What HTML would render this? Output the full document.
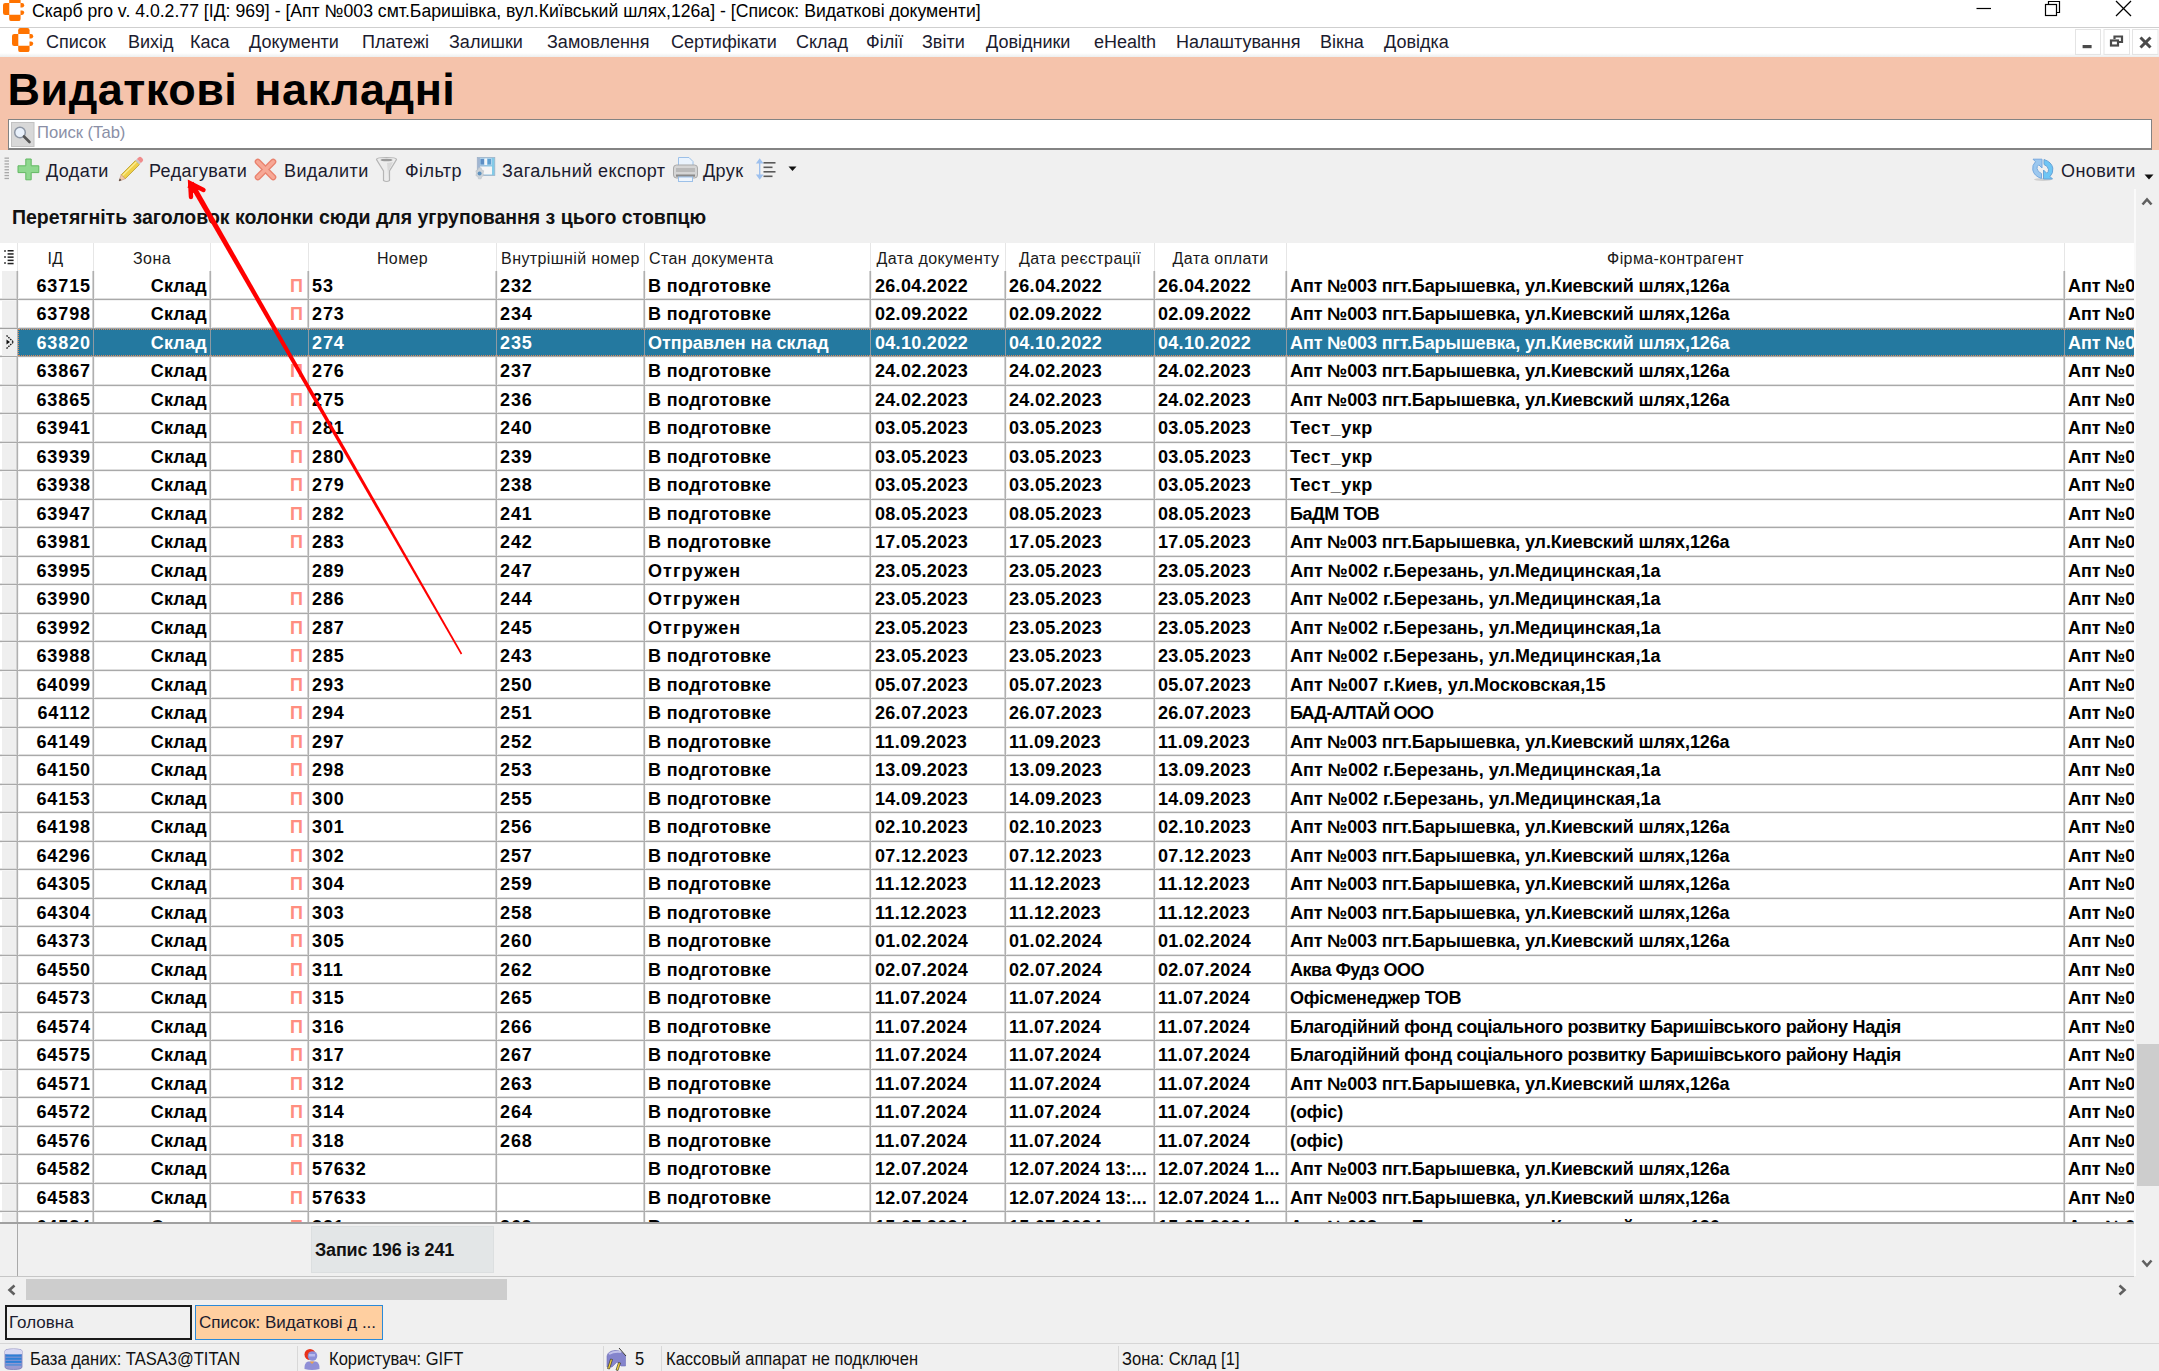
<!DOCTYPE html>
<html><head><meta charset="utf-8"><title>Скарб pro</title><style>
*{margin:0;padding:0;box-sizing:border-box}
html,body{width:2159px;height:1371px;overflow:hidden;background:#f0f0f0;font-family:"Liberation Sans", sans-serif;}
.a{position:absolute}
.t{position:absolute;white-space:nowrap;line-height:1}
.cell{position:absolute;white-space:nowrap;overflow:hidden;font-weight:bold;font-size:18px;line-height:28px;color:#000}
.n{letter-spacing:0.9px}
.d{letter-spacing:0.3px}
.f{letter-spacing:-0.3px}
.s{letter-spacing:0.4px}
.hl{position:absolute;left:0;width:2134px;height:1px;background:#a9a9a9;box-shadow:0 -1px 0 #dedede,0 1px 0 #f3f3f3}
.vl{position:absolute;width:1px;background:#b0b0b0;box-shadow:-1px 0 0 #d2d2d2,1px 0 0 #f3f3f3}
.hd{position:absolute;top:245px;height:28px;font-size:16px;letter-spacing:0.4px;line-height:28px;color:#1a1a1a;white-space:nowrap;text-align:center;overflow:hidden}
.mn{position:absolute;white-space:nowrap;top:31px;font-size:18px;line-height:22px;color:#1b1b2e}
.tb{position:absolute;white-space:nowrap;top:159.5px;font-size:18px;letter-spacing:0.4px;line-height:22px;color:#1b1b2e}
.sb{position:absolute;white-space:nowrap;top:1348px;font-size:18.8px;line-height:22px;color:#111;transform:scaleX(0.88);transform-origin:0 0}
</style></head>
<body>
<div class="a" style="left:0;top:0;width:2159px;height:27px;background:#fff"></div><div class="a" style="left:0;top:27px;width:2159px;height:1px;background:#cfcfcf"></div><svg class="a" style="left:3px;top:-3px" width="22" height="25" viewBox="0 0 22 25">
<g fill="#ff7300">
<path d="M6.2 2.2 Q6.2 0 8.4 0 H15.4 Q17.6 0 17.6 2.2 V5.9 H6.2 Z"/>
<path d="M0 8.1 Q0 5.9 2.2 5.9 H6.3 V17.9 H2.2 Q0 17.9 0 15.7 Z"/>
<path d="M6.2 17.8 H17.6 V21.9 Q17.6 24.1 15.4 24.1 H8.4 Q6.2 24.1 6.2 21.9 Z"/>
<path d="M17.5 5.9 H19 Q21.2 5.9 21.2 8.2 Q21.2 10.6 19 10.6 H17.5 Z"/>
<path d="M17.5 13.4 H19 Q21.2 13.4 21.2 15.6 Q21.2 17.9 19 17.9 H17.5 Z"/>
</g></svg><div class="t" style="left:32px;top:0px;font-size:17.65px;color:#000;line-height:22px">Скарб pro v. 4.0.2.77 [ІД: 969] - [Апт №003 смт.Баришівка, вул.Київський шлях,126а] - [Список: Видаткові документи]</div><svg class="a" style="left:1960px;top:0" width="199" height="27" viewBox="0 0 199 27">
<g stroke="#000" stroke-width="1.2" fill="none">
<line x1="16.5" y1="8.5" x2="31" y2="8.5"/>
<rect x="85.5" y="4.5" width="11" height="11"/>
<path d="M88.5 4.5 V1.5 H99.5 V12.5 H96.5"/>
<line x1="156" y1="1" x2="171" y2="16"/>
<line x1="171" y1="1" x2="156" y2="16"/>
</g></svg><div class="a" style="left:0;top:28px;width:2159px;height:29px;background:#fff"></div><div class="a" style="left:0;top:53px;width:2159px;height:4px;background:linear-gradient(#fff,#eceeee)"></div><svg class="a" style="left:12px;top:28px" width="22" height="25" viewBox="0 0 22 25">
<g fill="#ff7300">
<path d="M6.2 2.2 Q6.2 0 8.4 0 H15.4 Q17.6 0 17.6 2.2 V5.9 H6.2 Z"/>
<path d="M0 8.1 Q0 5.9 2.2 5.9 H6.3 V17.9 H2.2 Q0 17.9 0 15.7 Z"/>
<path d="M6.2 17.8 H17.6 V21.9 Q17.6 24.1 15.4 24.1 H8.4 Q6.2 24.1 6.2 21.9 Z"/>
<path d="M17.5 5.9 H19 Q21.2 5.9 21.2 8.2 Q21.2 10.6 19 10.6 H17.5 Z"/>
<path d="M17.5 13.4 H19 Q21.2 13.4 21.2 15.6 Q21.2 17.9 19 17.9 H17.5 Z"/>
</g></svg><div class="mn" style="left:46px">Список</div><div class="mn" style="left:128px">Вихід</div><div class="mn" style="left:190px">Каса</div><div class="mn" style="left:249px">Документи</div><div class="mn" style="left:362px">Платежі</div><div class="mn" style="left:449px">Залишки</div><div class="mn" style="left:547px">Замовлення</div><div class="mn" style="left:671px">Сертифікати</div><div class="mn" style="left:796px">Склад</div><div class="mn" style="left:866px">Філії</div><div class="mn" style="left:922px">Звіти</div><div class="mn" style="left:986px">Довідники</div><div class="mn" style="left:1094px">eHealth</div><div class="mn" style="left:1176px">Налаштування</div><div class="mn" style="left:1320px">Вікна</div><div class="mn" style="left:1384px">Довідка</div><svg class="a" style="left:2074px;top:29px" width="85" height="27" viewBox="0 0 85 27">
<g fill="none" stroke="#e4e4e4" stroke-width="1">
<rect x="1.5" y="0.5" width="25" height="25"/>
<rect x="30" y="0.5" width="25.5" height="25"/>
<rect x="58.5" y="0.5" width="25.5" height="25"/>
</g>
<rect x="8.6" y="16" width="9" height="3.2" fill="#4a4a4a"/>
<g fill="none" stroke="#4a4a4a" stroke-width="2.2">
<rect x="37" y="11.5" width="7" height="5"/>
<path d="M40.5 10 V7.5 H48 V13 H45"/>
</g>
<g stroke="#4a4a4a" stroke-width="3" stroke-linecap="butt">
<line x1="66.5" y1="8.5" x2="76.5" y2="18.5"/>
<line x1="76.5" y1="8.5" x2="66.5" y2="18.5"/>
</g></svg><div class="a" style="left:0;top:57px;width:2159px;height:93px;background:#f5c3ab"></div><div class="t" style="left:7.5px;top:66px;font-size:45px;font-weight:bold;line-height:48px;color:#000;letter-spacing:0.49px;word-spacing:4px">Видаткові накладні</div><div class="a" style="left:8px;top:119px;width:2144px;height:31px;background:#fff;border:1px solid #838383;border-width:1px 1px 2px 1px"></div><svg class="a" style="left:11px;top:122px" width="24" height="25" viewBox="0 0 24 25">
<rect x="0.5" y="0.5" width="22.5" height="24" fill="#d8d8d8" stroke="#c2c2c2"/>
<circle cx="9" cy="10.5" r="5.3" fill="#e9f1fb" stroke="#8d96a4" stroke-width="1.5"/>
<line x1="13" y1="14.5" x2="18.5" y2="20" stroke="#555" stroke-width="2.6" stroke-linecap="round"/>
</svg><div class="t" style="left:37px;top:123px;font-size:16.6px;line-height:20px;color:#8a8fa6">Поиск (Tab)</div><svg class="a" style="left:4px;top:157px" width="6" height="24" viewBox="0 0 6 24"><g fill="#a8a8a8"><rect x="0.5" y="0.5" width="4.5" height="1.3"/><rect x="0.5" y="3.4" width="4.5" height="1.3"/><rect x="0.5" y="6.3" width="4.5" height="1.3"/><rect x="0.5" y="9.2" width="4.5" height="1.3"/><rect x="0.5" y="12.1" width="4.5" height="1.3"/><rect x="0.5" y="15.0" width="4.5" height="1.3"/><rect x="0.5" y="17.9" width="4.5" height="1.3"/><rect x="0.5" y="20.8" width="4.5" height="1.3"/></g></svg><svg class="a" style="left:17px;top:158px" width="23" height="23" viewBox="0 0 23 23">
<path d="M8.8 1 H14.2 V7.8 H21.8 V14.6 H14.2 V21.8 H8.8 V14.6 H1 V7.8 H8.8 Z" fill="#8fd88f" stroke="#63b863" stroke-width="1"/>
</svg><svg class="a" style="left:117px;top:156px" width="28" height="27" viewBox="0 0 28 27">
<path d="M4.2 18.8 L18.4 4.6 L22.4 8.6 L8.2 22.8 Z" fill="#f0d048" stroke="#b89a2c" stroke-width="0.8"/>
<path d="M5.6 19.6 L19.4 5.8" stroke="#fbef9a" stroke-width="1.2"/>
<path d="M18.4 4.6 L19.9 3.1 L23.9 7.1 L22.4 8.6 Z" fill="#c8c8c8"/>
<path d="M19.9 3.1 L21.5 1.5 Q23 0 24.5 1.5 L25.5 2.5 Q27 4 25.5 5.5 L23.9 7.1 Z" fill="#f08c8c"/>
<path d="M2 25 L4.2 18.8 L8.2 22.8 Z" fill="#f2c9a6" stroke="#c99478" stroke-width="0.6"/>
<path d="M2 25 L2.8 22.6 L4.4 24.2 Z" fill="#333"/>
</svg><svg class="a" style="left:253px;top:157px" width="25" height="25" viewBox="0 0 25 25">
<g stroke="#e9826e" stroke-width="6.2" stroke-linecap="round">
<line x1="4.8" y1="4.8" x2="20.2" y2="20.2"/><line x1="20.2" y1="4.8" x2="4.8" y2="20.2"/>
</g>
<g stroke="#f7a896" stroke-width="3.6" stroke-linecap="round">
<line x1="4.8" y1="4.8" x2="20.2" y2="20.2"/><line x1="20.2" y1="4.8" x2="4.8" y2="20.2"/>
</g></svg><svg class="a" style="left:375px;top:156px" width="24" height="27" viewBox="0 0 24 27">
<path d="M1.5 3.5 Q1.5 1.5 11.5 1.5 Q21.5 1.5 21.5 3.5 L14.5 15 V24.5 Q11.5 26.5 8.5 24.5 V15 Z" fill="#ececec" stroke="#b5b5b5" stroke-width="1.2"/>
<ellipse cx="11.5" cy="4" rx="6" ry="1.3" fill="#9a9a9a"/>
<path d="M12 7 L18 6 L13.5 15 V24" fill="#d0d0d0" opacity="0.7"/>
</svg><svg class="a" style="left:471px;top:156px" width="26" height="26" viewBox="0 0 26 26">
<defs><linearGradient id="fg" x1="0" x2="1"><stop offset="0" stop-color="#a4b4d0"/><stop offset="1" stop-color="#7fcdea"/></linearGradient></defs>
<rect x="6.3" y="1.5" width="17.5" height="18" fill="url(#fg)" stroke="#9fb3c9" stroke-width="0.8"/>
<rect x="9" y="2.2" width="12" height="7" fill="#aed4ee"/>
<rect x="9.5" y="3" width="3.5" height="5.5" fill="#5f8fc4"/>
<rect x="16.5" y="3" width="3.5" height="5.5" fill="#5f9fd0"/>
<rect x="13.5" y="2.5" width="2.5" height="6.5" fill="#f4f6f8"/>
<rect x="9" y="10.5" width="12" height="8" fill="#f6f6f6"/>
<path d="M7.5 11.8 h2.6 l0.6 2 l2 1 l-0.6 2.4 l0.6 2.4 l-2 1 l-0.6 2.2 h-2.6 l-0.6 -2.2 l-2 -1 l0.6 -2.4 l-0.6 -2.4 l2 -1 Z" fill="#cdd3d8" stroke="#b9c1c7" stroke-width="0.6"/>
<circle cx="8.6" cy="17.6" r="2" fill="#5d90bd"/>
</svg><svg class="a" style="left:672px;top:156px" width="27" height="27" viewBox="0 0 27 27">
<path d="M6.5 1.5 H17 L21 5.5 V10 H6.5 Z" fill="#eaf3fd" stroke="#9cc0e8" stroke-width="1"/>
<rect x="1.5" y="9" width="24" height="13" rx="3" fill="#d5d5d5" stroke="#a9a9a9" stroke-width="1"/>
<rect x="4" y="12" width="19" height="4" fill="#b9b9b9"/>
<rect x="4" y="18.5" width="19" height="2.2" fill="#8a8a8a"/>
<rect x="6.5" y="21" width="14" height="4.5" fill="#eef5fd" stroke="#9cc0e8" stroke-width="1"/>
</svg><svg class="a" style="left:755px;top:158px" width="44" height="22" viewBox="0 0 44 22">
<g stroke="#9dc0ee" stroke-width="1.4" fill="#9dc0ee">
<line x1="4.7" y1="3" x2="4.7" y2="19"/>
<path d="M2.2 4.8 L4.7 1.5 L7.2 4.8 Z"/><path d="M2.2 17.2 L4.7 20.5 L7.2 17.2 Z"/>
</g>
<g fill="#5a5a5a">
<rect x="8.5" y="4" width="12" height="1.6"/>
<rect x="8.5" y="8.5" width="9" height="1.6"/>
<rect x="8.5" y="13" width="12" height="1.6"/>
<rect x="8.5" y="17.5" width="9" height="1.6"/>
</g>
<path d="M33.5 8.5 H41.5 L37.5 13 Z" fill="#111"/>
</svg><svg class="a" style="left:2031px;top:158px" width="24" height="24" viewBox="0 0 24 24">
<ellipse cx="12" cy="21.5" rx="9" ry="1.5" fill="#cfcfcf"/>
<path d="M11 1.2 H2 L4.5 3.7 Q1 7 1.8 12 Q3 18 10.5 20.5 V15.5 Q6.5 14 6 10.5 Q5.8 8 7.8 6.8 L11 10 Z" fill="#9cc8ef" stroke="#77a9de" stroke-width="1"/>
<path d="M12.5 21 H21.5 L19 18.5 Q22.5 15 21.8 10 Q20.6 4 13 1.5 V6.5 Q17 8 17.5 11.5 Q17.7 14 15.7 15.2 L12.5 12 Z" fill="#6ec6f5" stroke="#6aa3d6" stroke-width="1"/>
</svg><div class="tb" style="left:46px">Додати</div><div class="tb" style="left:149px">Редагувати</div><div class="tb" style="left:284px">Видалити</div><div class="tb" style="left:405px">Фільтр</div><div class="tb" style="left:502px">Загальний експорт</div><div class="tb" style="left:703px">Друк</div><div class="tb" style="left:2061px">Оновити</div><svg class="a" style="left:2143px;top:173px" width="12" height="9" viewBox="0 0 12 9"><path d="M1.5 1.5 H10.5 L6 6.5 Z" fill="#111"/></svg><div class="t" style="left:12px;top:206px;font-size:19.5px;font-weight:bold;line-height:22px;color:#111">Перетягніть заголовок колонки сюди для угруповання з цього стовпцю</div><div class="a" style="left:0;top:243px;width:2134px;height:28px;background:#fff"></div><svg class="a" style="left:3px;top:249px" width="12" height="16" viewBox="0 0 12 16">
<g fill="#222">
<rect x="1.2" y="1.2" width="1.6" height="1.6"/><rect x="1.2" y="7.2" width="1.6" height="1.6"/><rect x="1.2" y="13.2" width="1.6" height="1.6"/>
<rect x="4.6" y="1" width="6" height="1.5"/><rect x="4.6" y="4.2" width="6" height="1.5"/><rect x="4.6" y="7.4" width="6" height="1.5"/><rect x="4.6" y="10.6" width="6" height="1.5"/><rect x="4.6" y="13.8" width="6" height="1.5"/>
</g></svg><div class="a" style="left:0;top:271px;width:2134px;height:952px;background:#fff"></div><div class="a" style="left:2px;top:271px;width:15px;height:952px;background:#efefef"></div><div class="hd" style="left:18px;width:75px;text-align:center;">ІД</div><div class="hd" style="left:94px;width:116px;text-align:center;">Зона</div><div class="hd" style="left:211px;width:97px;text-align:center;"></div><div class="hd" style="left:309px;width:187px;text-align:center;">Номер</div><div class="hd" style="left:497px;width:147px;text-align:center;">Внутрішній номер</div><div class="hd" style="left:645px;width:225px;text-align:left;padding-left:4px;">Стан документа</div><div class="hd" style="left:871px;width:134px;text-align:center;">Дата документу</div><div class="hd" style="left:1006px;width:148px;text-align:center;">Дата реєстрації</div><div class="hd" style="left:1155px;width:131px;text-align:center;">Дата оплати</div><div class="hd" style="left:1287px;width:777px;text-align:center;">Фірма-контрагент</div><div class="hd" style="left:2065px;width:69px;text-align:center;"></div><div class="a" style="left:17px;top:243px;width:1px;height:28px;background:#e6e6e6"></div><div class="a" style="left:93px;top:243px;width:1px;height:28px;background:#e6e6e6"></div><div class="a" style="left:210px;top:243px;width:1px;height:28px;background:#e6e6e6"></div><div class="a" style="left:308px;top:243px;width:1px;height:28px;background:#e6e6e6"></div><div class="a" style="left:496px;top:243px;width:1px;height:28px;background:#e6e6e6"></div><div class="a" style="left:644px;top:243px;width:1px;height:28px;background:#e6e6e6"></div><div class="a" style="left:870px;top:243px;width:1px;height:28px;background:#e6e6e6"></div><div class="a" style="left:1005px;top:243px;width:1px;height:28px;background:#e6e6e6"></div><div class="a" style="left:1154px;top:243px;width:1px;height:28px;background:#e6e6e6"></div><div class="a" style="left:1286px;top:243px;width:1px;height:28px;background:#e6e6e6"></div><div class="a" style="left:2064px;top:243px;width:1px;height:28px;background:#e6e6e6"></div><div class="hl" style="top:299px"></div><div class="hl" style="top:328px"></div><div class="hl" style="top:356px"></div><div class="hl" style="top:385px"></div><div class="hl" style="top:413px"></div><div class="hl" style="top:442px"></div><div class="hl" style="top:470px"></div><div class="hl" style="top:499px"></div><div class="hl" style="top:527px"></div><div class="hl" style="top:556px"></div><div class="hl" style="top:584px"></div><div class="hl" style="top:613px"></div><div class="hl" style="top:641px"></div><div class="hl" style="top:670px"></div><div class="hl" style="top:698px"></div><div class="hl" style="top:727px"></div><div class="hl" style="top:755px"></div><div class="hl" style="top:784px"></div><div class="hl" style="top:812px"></div><div class="hl" style="top:841px"></div><div class="hl" style="top:869px"></div><div class="hl" style="top:898px"></div><div class="hl" style="top:926px"></div><div class="hl" style="top:955px"></div><div class="hl" style="top:983px"></div><div class="hl" style="top:1012px"></div><div class="hl" style="top:1040px"></div><div class="hl" style="top:1069px"></div><div class="hl" style="top:1097px"></div><div class="hl" style="top:1126px"></div><div class="hl" style="top:1154px"></div><div class="hl" style="top:1183px"></div><div class="hl" style="top:1211px"></div><div class="vl" style="left:17px;top:271px;height:952px"></div><div class="vl" style="left:93px;top:271px;height:952px"></div><div class="vl" style="left:210px;top:271px;height:952px"></div><div class="vl" style="left:308px;top:271px;height:952px"></div><div class="vl" style="left:496px;top:271px;height:952px"></div><div class="vl" style="left:644px;top:271px;height:952px"></div><div class="vl" style="left:870px;top:271px;height:952px"></div><div class="vl" style="left:1005px;top:271px;height:952px"></div><div class="vl" style="left:1154px;top:271px;height:952px"></div><div class="vl" style="left:1286px;top:271px;height:952px"></div><div class="vl" style="left:2064px;top:271px;height:952px"></div><div class="a" style="left:0;top:299px;width:2134px;height:1px;background:#a9a9a9"></div><div class="a" style="left:0;top:328px;width:2134px;height:1px;background:#a9a9a9"></div><div class="a" style="left:0;top:356px;width:2134px;height:1px;background:#a9a9a9"></div><div class="a" style="left:0;top:385px;width:2134px;height:1px;background:#a9a9a9"></div><div class="a" style="left:0;top:413px;width:2134px;height:1px;background:#a9a9a9"></div><div class="a" style="left:0;top:442px;width:2134px;height:1px;background:#a9a9a9"></div><div class="a" style="left:0;top:470px;width:2134px;height:1px;background:#a9a9a9"></div><div class="a" style="left:0;top:499px;width:2134px;height:1px;background:#a9a9a9"></div><div class="a" style="left:0;top:527px;width:2134px;height:1px;background:#a9a9a9"></div><div class="a" style="left:0;top:556px;width:2134px;height:1px;background:#a9a9a9"></div><div class="a" style="left:0;top:584px;width:2134px;height:1px;background:#a9a9a9"></div><div class="a" style="left:0;top:613px;width:2134px;height:1px;background:#a9a9a9"></div><div class="a" style="left:0;top:641px;width:2134px;height:1px;background:#a9a9a9"></div><div class="a" style="left:0;top:670px;width:2134px;height:1px;background:#a9a9a9"></div><div class="a" style="left:0;top:698px;width:2134px;height:1px;background:#a9a9a9"></div><div class="a" style="left:0;top:727px;width:2134px;height:1px;background:#a9a9a9"></div><div class="a" style="left:0;top:755px;width:2134px;height:1px;background:#a9a9a9"></div><div class="a" style="left:0;top:784px;width:2134px;height:1px;background:#a9a9a9"></div><div class="a" style="left:0;top:812px;width:2134px;height:1px;background:#a9a9a9"></div><div class="a" style="left:0;top:841px;width:2134px;height:1px;background:#a9a9a9"></div><div class="a" style="left:0;top:869px;width:2134px;height:1px;background:#a9a9a9"></div><div class="a" style="left:0;top:898px;width:2134px;height:1px;background:#a9a9a9"></div><div class="a" style="left:0;top:926px;width:2134px;height:1px;background:#a9a9a9"></div><div class="a" style="left:0;top:955px;width:2134px;height:1px;background:#a9a9a9"></div><div class="a" style="left:0;top:983px;width:2134px;height:1px;background:#a9a9a9"></div><div class="a" style="left:0;top:1012px;width:2134px;height:1px;background:#a9a9a9"></div><div class="a" style="left:0;top:1040px;width:2134px;height:1px;background:#a9a9a9"></div><div class="a" style="left:0;top:1069px;width:2134px;height:1px;background:#a9a9a9"></div><div class="a" style="left:0;top:1097px;width:2134px;height:1px;background:#a9a9a9"></div><div class="a" style="left:0;top:1126px;width:2134px;height:1px;background:#a9a9a9"></div><div class="a" style="left:0;top:1154px;width:2134px;height:1px;background:#a9a9a9"></div><div class="a" style="left:0;top:1183px;width:2134px;height:1px;background:#a9a9a9"></div><div class="a" style="left:0;top:1211px;width:2134px;height:1px;background:#a9a9a9"></div><div class="a" style="left:17px;top:271px;width:1px;height:952px;background:#b0b0b0"></div><div class="a" style="left:93px;top:271px;width:1px;height:952px;background:#b0b0b0"></div><div class="a" style="left:210px;top:271px;width:1px;height:952px;background:#b0b0b0"></div><div class="a" style="left:308px;top:271px;width:1px;height:952px;background:#b0b0b0"></div><div class="a" style="left:496px;top:271px;width:1px;height:952px;background:#b0b0b0"></div><div class="a" style="left:644px;top:271px;width:1px;height:952px;background:#b0b0b0"></div><div class="a" style="left:870px;top:271px;width:1px;height:952px;background:#b0b0b0"></div><div class="a" style="left:1005px;top:271px;width:1px;height:952px;background:#b0b0b0"></div><div class="a" style="left:1154px;top:271px;width:1px;height:952px;background:#b0b0b0"></div><div class="a" style="left:1286px;top:271px;width:1px;height:952px;background:#b0b0b0"></div><div class="a" style="left:2064px;top:271px;width:1px;height:952px;background:#b0b0b0"></div><div class="cell n" style="left:17px;top:272px;width:76px;height:28px;text-align:right;padding-right:2px;color:#000">63715</div><div class="cell " style="left:93px;top:272px;width:117px;height:28px;text-align:right;padding-right:3px;color:#000;letter-spacing:0.25px">Склад</div><div class="cell" style="left:210px;top:272px;width:98px;height:28px;text-align:right;padding-right:5px;color:#ff8e80;font-size:18px">П</div><div class="cell n" style="left:308px;top:272px;width:188px;height:28px;padding-left:4px;color:#000">53</div><div class="cell n" style="left:496px;top:272px;width:148px;height:28px;padding-left:4px;color:#000">232</div><div class="cell " style="left:644px;top:272px;width:226px;height:28px;padding-left:4px;color:#000;letter-spacing:0.4px">В подготовке</div><div class="cell d" style="left:870px;top:272px;width:135px;height:28px;padding-left:5px;color:#000">26.04.2022</div><div class="cell d" style="left:1005px;top:272px;width:149px;height:28px;padding-left:4px;color:#000">26.04.2022</div><div class="cell d" style="left:1154px;top:272px;width:132px;height:28px;padding-left:4px;color:#000">26.04.2022</div><div class="cell " style="left:1286px;top:272px;width:778px;height:28px;padding-left:4px;color:#000;letter-spacing:-0.12px">Апт №003 пгт.Барышевка, ул.Киевский шлях,126а</div><div class="cell " style="left:2064px;top:272px;width:70px;height:28px;padding-left:4px;color:#000;letter-spacing:-0.12px">Апт №003 пгт.Барышевка, ул.Киевский шлях,126а</div><div class="cell n" style="left:17px;top:300px;width:76px;height:29px;text-align:right;padding-right:2px;color:#000">63798</div><div class="cell " style="left:93px;top:300px;width:117px;height:29px;text-align:right;padding-right:3px;color:#000;letter-spacing:0.25px">Склад</div><div class="cell" style="left:210px;top:300px;width:98px;height:29px;text-align:right;padding-right:5px;color:#ff8e80;font-size:18px">П</div><div class="cell n" style="left:308px;top:300px;width:188px;height:29px;padding-left:4px;color:#000">273</div><div class="cell n" style="left:496px;top:300px;width:148px;height:29px;padding-left:4px;color:#000">234</div><div class="cell " style="left:644px;top:300px;width:226px;height:29px;padding-left:4px;color:#000;letter-spacing:0.4px">В подготовке</div><div class="cell d" style="left:870px;top:300px;width:135px;height:29px;padding-left:5px;color:#000">02.09.2022</div><div class="cell d" style="left:1005px;top:300px;width:149px;height:29px;padding-left:4px;color:#000">02.09.2022</div><div class="cell d" style="left:1154px;top:300px;width:132px;height:29px;padding-left:4px;color:#000">02.09.2022</div><div class="cell " style="left:1286px;top:300px;width:778px;height:29px;padding-left:4px;color:#000;letter-spacing:-0.12px">Апт №003 пгт.Барышевка, ул.Киевский шлях,126а</div><div class="cell " style="left:2064px;top:300px;width:70px;height:29px;padding-left:4px;color:#000;letter-spacing:-0.12px">Апт №003 пгт.Барышевка, ул.Киевский шлях,126а</div><div class="a" style="left:17px;top:328px;width:2117px;height:28px;background:#2479a0"></div><div class="a" style="left:0;top:328px;width:2134px;height:1px;background:#a0a0a0"></div><div class="a" style="left:93px;top:328px;width:1px;height:28px;background:#8e9aa3"></div><div class="a" style="left:210px;top:328px;width:1px;height:28px;background:#8e9aa3"></div><div class="a" style="left:308px;top:328px;width:1px;height:28px;background:#8e9aa3"></div><div class="a" style="left:496px;top:328px;width:1px;height:28px;background:#8e9aa3"></div><div class="a" style="left:644px;top:328px;width:1px;height:28px;background:#8e9aa3"></div><div class="a" style="left:870px;top:328px;width:1px;height:28px;background:#8e9aa3"></div><div class="a" style="left:1005px;top:328px;width:1px;height:28px;background:#8e9aa3"></div><div class="a" style="left:1154px;top:328px;width:1px;height:28px;background:#8e9aa3"></div><div class="a" style="left:1286px;top:328px;width:1px;height:28px;background:#8e9aa3"></div><div class="a" style="left:2064px;top:328px;width:1px;height:28px;background:#8e9aa3"></div><div class="a" style="left:18px;top:329px;width:2116px;height:27px;border:1px dotted #d98a5a;border-right:none"></div><div class="a" style="left:17px;top:328px;width:1px;height:28px;background:#b0b0b0"></div><div class="a" style="left:2px;top:329px;width:15px;height:27px;background:#efefef"></div><svg class="a" style="left:5px;top:334px" width="10" height="16" viewBox="0 0 10 16">
<path d="M1.5 1.5 L8.5 8 L1.5 14.5" fill="none" stroke="#111" stroke-width="1.3" stroke-dasharray="1.6 0.9"/>
<path d="M1.5 5.5 L5 8 L1.5 10.5 Z" fill="#111"/>
</svg><div class="cell n" style="left:17px;top:329px;width:76px;height:28px;text-align:right;padding-right:2px;color:#fff">63820</div><div class="cell " style="left:93px;top:329px;width:117px;height:28px;text-align:right;padding-right:3px;color:#fff;letter-spacing:0.25px">Склад</div><div class="cell n" style="left:308px;top:329px;width:188px;height:28px;padding-left:4px;color:#fff">274</div><div class="cell n" style="left:496px;top:329px;width:148px;height:28px;padding-left:4px;color:#fff">235</div><div class="cell " style="left:644px;top:329px;width:226px;height:28px;padding-left:4px;color:#fff;letter-spacing:0px">Отправлен на склад</div><div class="cell d" style="left:870px;top:329px;width:135px;height:28px;padding-left:5px;color:#fff">04.10.2022</div><div class="cell d" style="left:1005px;top:329px;width:149px;height:28px;padding-left:4px;color:#fff">04.10.2022</div><div class="cell d" style="left:1154px;top:329px;width:132px;height:28px;padding-left:4px;color:#fff">04.10.2022</div><div class="cell " style="left:1286px;top:329px;width:778px;height:28px;padding-left:4px;color:#fff;letter-spacing:-0.12px">Апт №003 пгт.Барышевка, ул.Киевский шлях,126а</div><div class="cell " style="left:2064px;top:329px;width:70px;height:28px;padding-left:4px;color:#fff;letter-spacing:-0.12px">Апт №003 пгт.Барышевка, ул.Киевский шлях,126а</div><div class="cell n" style="left:17px;top:357px;width:76px;height:29px;text-align:right;padding-right:2px;color:#000">63867</div><div class="cell " style="left:93px;top:357px;width:117px;height:29px;text-align:right;padding-right:3px;color:#000;letter-spacing:0.25px">Склад</div><div class="cell" style="left:210px;top:357px;width:98px;height:29px;text-align:right;padding-right:5px;color:#ff8e80;font-size:18px">П</div><div class="cell n" style="left:308px;top:357px;width:188px;height:29px;padding-left:4px;color:#000">276</div><div class="cell n" style="left:496px;top:357px;width:148px;height:29px;padding-left:4px;color:#000">237</div><div class="cell " style="left:644px;top:357px;width:226px;height:29px;padding-left:4px;color:#000;letter-spacing:0.4px">В подготовке</div><div class="cell d" style="left:870px;top:357px;width:135px;height:29px;padding-left:5px;color:#000">24.02.2023</div><div class="cell d" style="left:1005px;top:357px;width:149px;height:29px;padding-left:4px;color:#000">24.02.2023</div><div class="cell d" style="left:1154px;top:357px;width:132px;height:29px;padding-left:4px;color:#000">24.02.2023</div><div class="cell " style="left:1286px;top:357px;width:778px;height:29px;padding-left:4px;color:#000;letter-spacing:-0.12px">Апт №003 пгт.Барышевка, ул.Киевский шлях,126а</div><div class="cell " style="left:2064px;top:357px;width:70px;height:29px;padding-left:4px;color:#000;letter-spacing:-0.12px">Апт №003 пгт.Барышевка, ул.Киевский шлях,126а</div><div class="cell n" style="left:17px;top:386px;width:76px;height:28px;text-align:right;padding-right:2px;color:#000">63865</div><div class="cell " style="left:93px;top:386px;width:117px;height:28px;text-align:right;padding-right:3px;color:#000;letter-spacing:0.25px">Склад</div><div class="cell" style="left:210px;top:386px;width:98px;height:28px;text-align:right;padding-right:5px;color:#ff8e80;font-size:18px">П</div><div class="cell n" style="left:308px;top:386px;width:188px;height:28px;padding-left:4px;color:#000">275</div><div class="cell n" style="left:496px;top:386px;width:148px;height:28px;padding-left:4px;color:#000">236</div><div class="cell " style="left:644px;top:386px;width:226px;height:28px;padding-left:4px;color:#000;letter-spacing:0.4px">В подготовке</div><div class="cell d" style="left:870px;top:386px;width:135px;height:28px;padding-left:5px;color:#000">24.02.2023</div><div class="cell d" style="left:1005px;top:386px;width:149px;height:28px;padding-left:4px;color:#000">24.02.2023</div><div class="cell d" style="left:1154px;top:386px;width:132px;height:28px;padding-left:4px;color:#000">24.02.2023</div><div class="cell " style="left:1286px;top:386px;width:778px;height:28px;padding-left:4px;color:#000;letter-spacing:-0.12px">Апт №003 пгт.Барышевка, ул.Киевский шлях,126а</div><div class="cell " style="left:2064px;top:386px;width:70px;height:28px;padding-left:4px;color:#000;letter-spacing:-0.12px">Апт №003 пгт.Барышевка, ул.Киевский шлях,126а</div><div class="cell n" style="left:17px;top:414px;width:76px;height:29px;text-align:right;padding-right:2px;color:#000">63941</div><div class="cell " style="left:93px;top:414px;width:117px;height:29px;text-align:right;padding-right:3px;color:#000;letter-spacing:0.25px">Склад</div><div class="cell" style="left:210px;top:414px;width:98px;height:29px;text-align:right;padding-right:5px;color:#ff8e80;font-size:18px">П</div><div class="cell n" style="left:308px;top:414px;width:188px;height:29px;padding-left:4px;color:#000">281</div><div class="cell n" style="left:496px;top:414px;width:148px;height:29px;padding-left:4px;color:#000">240</div><div class="cell " style="left:644px;top:414px;width:226px;height:29px;padding-left:4px;color:#000;letter-spacing:0.4px">В подготовке</div><div class="cell d" style="left:870px;top:414px;width:135px;height:29px;padding-left:5px;color:#000">03.05.2023</div><div class="cell d" style="left:1005px;top:414px;width:149px;height:29px;padding-left:4px;color:#000">03.05.2023</div><div class="cell d" style="left:1154px;top:414px;width:132px;height:29px;padding-left:4px;color:#000">03.05.2023</div><div class="cell " style="left:1286px;top:414px;width:778px;height:29px;padding-left:4px;color:#000;letter-spacing:0.5px">Тест_укр</div><div class="cell " style="left:2064px;top:414px;width:70px;height:29px;padding-left:4px;color:#000;letter-spacing:-0.12px">Апт №003 пгт.Барышевка, ул.Киевский шлях,126а</div><div class="cell n" style="left:17px;top:443px;width:76px;height:28px;text-align:right;padding-right:2px;color:#000">63939</div><div class="cell " style="left:93px;top:443px;width:117px;height:28px;text-align:right;padding-right:3px;color:#000;letter-spacing:0.25px">Склад</div><div class="cell" style="left:210px;top:443px;width:98px;height:28px;text-align:right;padding-right:5px;color:#ff8e80;font-size:18px">П</div><div class="cell n" style="left:308px;top:443px;width:188px;height:28px;padding-left:4px;color:#000">280</div><div class="cell n" style="left:496px;top:443px;width:148px;height:28px;padding-left:4px;color:#000">239</div><div class="cell " style="left:644px;top:443px;width:226px;height:28px;padding-left:4px;color:#000;letter-spacing:0.4px">В подготовке</div><div class="cell d" style="left:870px;top:443px;width:135px;height:28px;padding-left:5px;color:#000">03.05.2023</div><div class="cell d" style="left:1005px;top:443px;width:149px;height:28px;padding-left:4px;color:#000">03.05.2023</div><div class="cell d" style="left:1154px;top:443px;width:132px;height:28px;padding-left:4px;color:#000">03.05.2023</div><div class="cell " style="left:1286px;top:443px;width:778px;height:28px;padding-left:4px;color:#000;letter-spacing:0.5px">Тест_укр</div><div class="cell " style="left:2064px;top:443px;width:70px;height:28px;padding-left:4px;color:#000;letter-spacing:-0.12px">Апт №003 пгт.Барышевка, ул.Киевский шлях,126а</div><div class="cell n" style="left:17px;top:471px;width:76px;height:29px;text-align:right;padding-right:2px;color:#000">63938</div><div class="cell " style="left:93px;top:471px;width:117px;height:29px;text-align:right;padding-right:3px;color:#000;letter-spacing:0.25px">Склад</div><div class="cell" style="left:210px;top:471px;width:98px;height:29px;text-align:right;padding-right:5px;color:#ff8e80;font-size:18px">П</div><div class="cell n" style="left:308px;top:471px;width:188px;height:29px;padding-left:4px;color:#000">279</div><div class="cell n" style="left:496px;top:471px;width:148px;height:29px;padding-left:4px;color:#000">238</div><div class="cell " style="left:644px;top:471px;width:226px;height:29px;padding-left:4px;color:#000;letter-spacing:0.4px">В подготовке</div><div class="cell d" style="left:870px;top:471px;width:135px;height:29px;padding-left:5px;color:#000">03.05.2023</div><div class="cell d" style="left:1005px;top:471px;width:149px;height:29px;padding-left:4px;color:#000">03.05.2023</div><div class="cell d" style="left:1154px;top:471px;width:132px;height:29px;padding-left:4px;color:#000">03.05.2023</div><div class="cell " style="left:1286px;top:471px;width:778px;height:29px;padding-left:4px;color:#000;letter-spacing:0.5px">Тест_укр</div><div class="cell " style="left:2064px;top:471px;width:70px;height:29px;padding-left:4px;color:#000;letter-spacing:-0.12px">Апт №003 пгт.Барышевка, ул.Киевский шлях,126а</div><div class="cell n" style="left:17px;top:500px;width:76px;height:28px;text-align:right;padding-right:2px;color:#000">63947</div><div class="cell " style="left:93px;top:500px;width:117px;height:28px;text-align:right;padding-right:3px;color:#000;letter-spacing:0.25px">Склад</div><div class="cell" style="left:210px;top:500px;width:98px;height:28px;text-align:right;padding-right:5px;color:#ff8e80;font-size:18px">П</div><div class="cell n" style="left:308px;top:500px;width:188px;height:28px;padding-left:4px;color:#000">282</div><div class="cell n" style="left:496px;top:500px;width:148px;height:28px;padding-left:4px;color:#000">241</div><div class="cell " style="left:644px;top:500px;width:226px;height:28px;padding-left:4px;color:#000;letter-spacing:0.4px">В подготовке</div><div class="cell d" style="left:870px;top:500px;width:135px;height:28px;padding-left:5px;color:#000">08.05.2023</div><div class="cell d" style="left:1005px;top:500px;width:149px;height:28px;padding-left:4px;color:#000">08.05.2023</div><div class="cell d" style="left:1154px;top:500px;width:132px;height:28px;padding-left:4px;color:#000">08.05.2023</div><div class="cell " style="left:1286px;top:500px;width:778px;height:28px;padding-left:4px;color:#000;letter-spacing:-0.5px">БаДМ ТОВ</div><div class="cell " style="left:2064px;top:500px;width:70px;height:28px;padding-left:4px;color:#000;letter-spacing:-0.12px">Апт №003 пгт.Барышевка, ул.Киевский шлях,126а</div><div class="cell n" style="left:17px;top:528px;width:76px;height:29px;text-align:right;padding-right:2px;color:#000">63981</div><div class="cell " style="left:93px;top:528px;width:117px;height:29px;text-align:right;padding-right:3px;color:#000;letter-spacing:0.25px">Склад</div><div class="cell" style="left:210px;top:528px;width:98px;height:29px;text-align:right;padding-right:5px;color:#ff8e80;font-size:18px">П</div><div class="cell n" style="left:308px;top:528px;width:188px;height:29px;padding-left:4px;color:#000">283</div><div class="cell n" style="left:496px;top:528px;width:148px;height:29px;padding-left:4px;color:#000">242</div><div class="cell " style="left:644px;top:528px;width:226px;height:29px;padding-left:4px;color:#000;letter-spacing:0.4px">В подготовке</div><div class="cell d" style="left:870px;top:528px;width:135px;height:29px;padding-left:5px;color:#000">17.05.2023</div><div class="cell d" style="left:1005px;top:528px;width:149px;height:29px;padding-left:4px;color:#000">17.05.2023</div><div class="cell d" style="left:1154px;top:528px;width:132px;height:29px;padding-left:4px;color:#000">17.05.2023</div><div class="cell " style="left:1286px;top:528px;width:778px;height:29px;padding-left:4px;color:#000;letter-spacing:-0.12px">Апт №003 пгт.Барышевка, ул.Киевский шлях,126а</div><div class="cell " style="left:2064px;top:528px;width:70px;height:29px;padding-left:4px;color:#000;letter-spacing:-0.12px">Апт №003 пгт.Барышевка, ул.Киевский шлях,126а</div><div class="cell n" style="left:17px;top:557px;width:76px;height:28px;text-align:right;padding-right:2px;color:#000">63995</div><div class="cell " style="left:93px;top:557px;width:117px;height:28px;text-align:right;padding-right:3px;color:#000;letter-spacing:0.25px">Склад</div><div class="cell n" style="left:308px;top:557px;width:188px;height:28px;padding-left:4px;color:#000">289</div><div class="cell n" style="left:496px;top:557px;width:148px;height:28px;padding-left:4px;color:#000">247</div><div class="cell " style="left:644px;top:557px;width:226px;height:28px;padding-left:4px;color:#000;letter-spacing:1.05px">Отгружен</div><div class="cell d" style="left:870px;top:557px;width:135px;height:28px;padding-left:5px;color:#000">23.05.2023</div><div class="cell d" style="left:1005px;top:557px;width:149px;height:28px;padding-left:4px;color:#000">23.05.2023</div><div class="cell d" style="left:1154px;top:557px;width:132px;height:28px;padding-left:4px;color:#000">23.05.2023</div><div class="cell " style="left:1286px;top:557px;width:778px;height:28px;padding-left:4px;color:#000;letter-spacing:0.03px">Апт №002 г.Березань, ул.Медицинская,1а</div><div class="cell " style="left:2064px;top:557px;width:70px;height:28px;padding-left:4px;color:#000;letter-spacing:-0.12px">Апт №003 пгт.Барышевка, ул.Киевский шлях,126а</div><div class="cell n" style="left:17px;top:585px;width:76px;height:29px;text-align:right;padding-right:2px;color:#000">63990</div><div class="cell " style="left:93px;top:585px;width:117px;height:29px;text-align:right;padding-right:3px;color:#000;letter-spacing:0.25px">Склад</div><div class="cell" style="left:210px;top:585px;width:98px;height:29px;text-align:right;padding-right:5px;color:#ff8e80;font-size:18px">П</div><div class="cell n" style="left:308px;top:585px;width:188px;height:29px;padding-left:4px;color:#000">286</div><div class="cell n" style="left:496px;top:585px;width:148px;height:29px;padding-left:4px;color:#000">244</div><div class="cell " style="left:644px;top:585px;width:226px;height:29px;padding-left:4px;color:#000;letter-spacing:1.05px">Отгружен</div><div class="cell d" style="left:870px;top:585px;width:135px;height:29px;padding-left:5px;color:#000">23.05.2023</div><div class="cell d" style="left:1005px;top:585px;width:149px;height:29px;padding-left:4px;color:#000">23.05.2023</div><div class="cell d" style="left:1154px;top:585px;width:132px;height:29px;padding-left:4px;color:#000">23.05.2023</div><div class="cell " style="left:1286px;top:585px;width:778px;height:29px;padding-left:4px;color:#000;letter-spacing:0.03px">Апт №002 г.Березань, ул.Медицинская,1а</div><div class="cell " style="left:2064px;top:585px;width:70px;height:29px;padding-left:4px;color:#000;letter-spacing:-0.12px">Апт №003 пгт.Барышевка, ул.Киевский шлях,126а</div><div class="cell n" style="left:17px;top:614px;width:76px;height:28px;text-align:right;padding-right:2px;color:#000">63992</div><div class="cell " style="left:93px;top:614px;width:117px;height:28px;text-align:right;padding-right:3px;color:#000;letter-spacing:0.25px">Склад</div><div class="cell" style="left:210px;top:614px;width:98px;height:28px;text-align:right;padding-right:5px;color:#ff8e80;font-size:18px">П</div><div class="cell n" style="left:308px;top:614px;width:188px;height:28px;padding-left:4px;color:#000">287</div><div class="cell n" style="left:496px;top:614px;width:148px;height:28px;padding-left:4px;color:#000">245</div><div class="cell " style="left:644px;top:614px;width:226px;height:28px;padding-left:4px;color:#000;letter-spacing:1.05px">Отгружен</div><div class="cell d" style="left:870px;top:614px;width:135px;height:28px;padding-left:5px;color:#000">23.05.2023</div><div class="cell d" style="left:1005px;top:614px;width:149px;height:28px;padding-left:4px;color:#000">23.05.2023</div><div class="cell d" style="left:1154px;top:614px;width:132px;height:28px;padding-left:4px;color:#000">23.05.2023</div><div class="cell " style="left:1286px;top:614px;width:778px;height:28px;padding-left:4px;color:#000;letter-spacing:0.03px">Апт №002 г.Березань, ул.Медицинская,1а</div><div class="cell " style="left:2064px;top:614px;width:70px;height:28px;padding-left:4px;color:#000;letter-spacing:-0.12px">Апт №003 пгт.Барышевка, ул.Киевский шлях,126а</div><div class="cell n" style="left:17px;top:642px;width:76px;height:29px;text-align:right;padding-right:2px;color:#000">63988</div><div class="cell " style="left:93px;top:642px;width:117px;height:29px;text-align:right;padding-right:3px;color:#000;letter-spacing:0.25px">Склад</div><div class="cell" style="left:210px;top:642px;width:98px;height:29px;text-align:right;padding-right:5px;color:#ff8e80;font-size:18px">П</div><div class="cell n" style="left:308px;top:642px;width:188px;height:29px;padding-left:4px;color:#000">285</div><div class="cell n" style="left:496px;top:642px;width:148px;height:29px;padding-left:4px;color:#000">243</div><div class="cell " style="left:644px;top:642px;width:226px;height:29px;padding-left:4px;color:#000;letter-spacing:0.4px">В подготовке</div><div class="cell d" style="left:870px;top:642px;width:135px;height:29px;padding-left:5px;color:#000">23.05.2023</div><div class="cell d" style="left:1005px;top:642px;width:149px;height:29px;padding-left:4px;color:#000">23.05.2023</div><div class="cell d" style="left:1154px;top:642px;width:132px;height:29px;padding-left:4px;color:#000">23.05.2023</div><div class="cell " style="left:1286px;top:642px;width:778px;height:29px;padding-left:4px;color:#000;letter-spacing:0.03px">Апт №002 г.Березань, ул.Медицинская,1а</div><div class="cell " style="left:2064px;top:642px;width:70px;height:29px;padding-left:4px;color:#000;letter-spacing:-0.12px">Апт №003 пгт.Барышевка, ул.Киевский шлях,126а</div><div class="cell n" style="left:17px;top:671px;width:76px;height:28px;text-align:right;padding-right:2px;color:#000">64099</div><div class="cell " style="left:93px;top:671px;width:117px;height:28px;text-align:right;padding-right:3px;color:#000;letter-spacing:0.25px">Склад</div><div class="cell" style="left:210px;top:671px;width:98px;height:28px;text-align:right;padding-right:5px;color:#ff8e80;font-size:18px">П</div><div class="cell n" style="left:308px;top:671px;width:188px;height:28px;padding-left:4px;color:#000">293</div><div class="cell n" style="left:496px;top:671px;width:148px;height:28px;padding-left:4px;color:#000">250</div><div class="cell " style="left:644px;top:671px;width:226px;height:28px;padding-left:4px;color:#000;letter-spacing:0.4px">В подготовке</div><div class="cell d" style="left:870px;top:671px;width:135px;height:28px;padding-left:5px;color:#000">05.07.2023</div><div class="cell d" style="left:1005px;top:671px;width:149px;height:28px;padding-left:4px;color:#000">05.07.2023</div><div class="cell d" style="left:1154px;top:671px;width:132px;height:28px;padding-left:4px;color:#000">05.07.2023</div><div class="cell " style="left:1286px;top:671px;width:778px;height:28px;padding-left:4px;color:#000;letter-spacing:0.06px">Апт №007 г.Киев, ул.Московская,15</div><div class="cell " style="left:2064px;top:671px;width:70px;height:28px;padding-left:4px;color:#000;letter-spacing:-0.12px">Апт №003 пгт.Барышевка, ул.Киевский шлях,126а</div><div class="cell n" style="left:17px;top:699px;width:76px;height:29px;text-align:right;padding-right:2px;color:#000">64112</div><div class="cell " style="left:93px;top:699px;width:117px;height:29px;text-align:right;padding-right:3px;color:#000;letter-spacing:0.25px">Склад</div><div class="cell" style="left:210px;top:699px;width:98px;height:29px;text-align:right;padding-right:5px;color:#ff8e80;font-size:18px">П</div><div class="cell n" style="left:308px;top:699px;width:188px;height:29px;padding-left:4px;color:#000">294</div><div class="cell n" style="left:496px;top:699px;width:148px;height:29px;padding-left:4px;color:#000">251</div><div class="cell " style="left:644px;top:699px;width:226px;height:29px;padding-left:4px;color:#000;letter-spacing:0.4px">В подготовке</div><div class="cell d" style="left:870px;top:699px;width:135px;height:29px;padding-left:5px;color:#000">26.07.2023</div><div class="cell d" style="left:1005px;top:699px;width:149px;height:29px;padding-left:4px;color:#000">26.07.2023</div><div class="cell d" style="left:1154px;top:699px;width:132px;height:29px;padding-left:4px;color:#000">26.07.2023</div><div class="cell " style="left:1286px;top:699px;width:778px;height:29px;padding-left:4px;color:#000;letter-spacing:-0.78px">БАД-АЛТАЙ ООО</div><div class="cell " style="left:2064px;top:699px;width:70px;height:29px;padding-left:4px;color:#000;letter-spacing:-0.12px">Апт №003 пгт.Барышевка, ул.Киевский шлях,126а</div><div class="cell n" style="left:17px;top:728px;width:76px;height:28px;text-align:right;padding-right:2px;color:#000">64149</div><div class="cell " style="left:93px;top:728px;width:117px;height:28px;text-align:right;padding-right:3px;color:#000;letter-spacing:0.25px">Склад</div><div class="cell" style="left:210px;top:728px;width:98px;height:28px;text-align:right;padding-right:5px;color:#ff8e80;font-size:18px">П</div><div class="cell n" style="left:308px;top:728px;width:188px;height:28px;padding-left:4px;color:#000">297</div><div class="cell n" style="left:496px;top:728px;width:148px;height:28px;padding-left:4px;color:#000">252</div><div class="cell " style="left:644px;top:728px;width:226px;height:28px;padding-left:4px;color:#000;letter-spacing:0.4px">В подготовке</div><div class="cell d" style="left:870px;top:728px;width:135px;height:28px;padding-left:5px;color:#000">11.09.2023</div><div class="cell d" style="left:1005px;top:728px;width:149px;height:28px;padding-left:4px;color:#000">11.09.2023</div><div class="cell d" style="left:1154px;top:728px;width:132px;height:28px;padding-left:4px;color:#000">11.09.2023</div><div class="cell " style="left:1286px;top:728px;width:778px;height:28px;padding-left:4px;color:#000;letter-spacing:-0.12px">Апт №003 пгт.Барышевка, ул.Киевский шлях,126а</div><div class="cell " style="left:2064px;top:728px;width:70px;height:28px;padding-left:4px;color:#000;letter-spacing:-0.12px">Апт №003 пгт.Барышевка, ул.Киевский шлях,126а</div><div class="cell n" style="left:17px;top:756px;width:76px;height:29px;text-align:right;padding-right:2px;color:#000">64150</div><div class="cell " style="left:93px;top:756px;width:117px;height:29px;text-align:right;padding-right:3px;color:#000;letter-spacing:0.25px">Склад</div><div class="cell" style="left:210px;top:756px;width:98px;height:29px;text-align:right;padding-right:5px;color:#ff8e80;font-size:18px">П</div><div class="cell n" style="left:308px;top:756px;width:188px;height:29px;padding-left:4px;color:#000">298</div><div class="cell n" style="left:496px;top:756px;width:148px;height:29px;padding-left:4px;color:#000">253</div><div class="cell " style="left:644px;top:756px;width:226px;height:29px;padding-left:4px;color:#000;letter-spacing:0.4px">В подготовке</div><div class="cell d" style="left:870px;top:756px;width:135px;height:29px;padding-left:5px;color:#000">13.09.2023</div><div class="cell d" style="left:1005px;top:756px;width:149px;height:29px;padding-left:4px;color:#000">13.09.2023</div><div class="cell d" style="left:1154px;top:756px;width:132px;height:29px;padding-left:4px;color:#000">13.09.2023</div><div class="cell " style="left:1286px;top:756px;width:778px;height:29px;padding-left:4px;color:#000;letter-spacing:0.03px">Апт №002 г.Березань, ул.Медицинская,1а</div><div class="cell " style="left:2064px;top:756px;width:70px;height:29px;padding-left:4px;color:#000;letter-spacing:-0.12px">Апт №003 пгт.Барышевка, ул.Киевский шлях,126а</div><div class="cell n" style="left:17px;top:785px;width:76px;height:28px;text-align:right;padding-right:2px;color:#000">64153</div><div class="cell " style="left:93px;top:785px;width:117px;height:28px;text-align:right;padding-right:3px;color:#000;letter-spacing:0.25px">Склад</div><div class="cell" style="left:210px;top:785px;width:98px;height:28px;text-align:right;padding-right:5px;color:#ff8e80;font-size:18px">П</div><div class="cell n" style="left:308px;top:785px;width:188px;height:28px;padding-left:4px;color:#000">300</div><div class="cell n" style="left:496px;top:785px;width:148px;height:28px;padding-left:4px;color:#000">255</div><div class="cell " style="left:644px;top:785px;width:226px;height:28px;padding-left:4px;color:#000;letter-spacing:0.4px">В подготовке</div><div class="cell d" style="left:870px;top:785px;width:135px;height:28px;padding-left:5px;color:#000">14.09.2023</div><div class="cell d" style="left:1005px;top:785px;width:149px;height:28px;padding-left:4px;color:#000">14.09.2023</div><div class="cell d" style="left:1154px;top:785px;width:132px;height:28px;padding-left:4px;color:#000">14.09.2023</div><div class="cell " style="left:1286px;top:785px;width:778px;height:28px;padding-left:4px;color:#000;letter-spacing:0.03px">Апт №002 г.Березань, ул.Медицинская,1а</div><div class="cell " style="left:2064px;top:785px;width:70px;height:28px;padding-left:4px;color:#000;letter-spacing:-0.12px">Апт №003 пгт.Барышевка, ул.Киевский шлях,126а</div><div class="cell n" style="left:17px;top:813px;width:76px;height:29px;text-align:right;padding-right:2px;color:#000">64198</div><div class="cell " style="left:93px;top:813px;width:117px;height:29px;text-align:right;padding-right:3px;color:#000;letter-spacing:0.25px">Склад</div><div class="cell" style="left:210px;top:813px;width:98px;height:29px;text-align:right;padding-right:5px;color:#ff8e80;font-size:18px">П</div><div class="cell n" style="left:308px;top:813px;width:188px;height:29px;padding-left:4px;color:#000">301</div><div class="cell n" style="left:496px;top:813px;width:148px;height:29px;padding-left:4px;color:#000">256</div><div class="cell " style="left:644px;top:813px;width:226px;height:29px;padding-left:4px;color:#000;letter-spacing:0.4px">В подготовке</div><div class="cell d" style="left:870px;top:813px;width:135px;height:29px;padding-left:5px;color:#000">02.10.2023</div><div class="cell d" style="left:1005px;top:813px;width:149px;height:29px;padding-left:4px;color:#000">02.10.2023</div><div class="cell d" style="left:1154px;top:813px;width:132px;height:29px;padding-left:4px;color:#000">02.10.2023</div><div class="cell " style="left:1286px;top:813px;width:778px;height:29px;padding-left:4px;color:#000;letter-spacing:-0.12px">Апт №003 пгт.Барышевка, ул.Киевский шлях,126а</div><div class="cell " style="left:2064px;top:813px;width:70px;height:29px;padding-left:4px;color:#000;letter-spacing:-0.12px">Апт №003 пгт.Барышевка, ул.Киевский шлях,126а</div><div class="cell n" style="left:17px;top:842px;width:76px;height:28px;text-align:right;padding-right:2px;color:#000">64296</div><div class="cell " style="left:93px;top:842px;width:117px;height:28px;text-align:right;padding-right:3px;color:#000;letter-spacing:0.25px">Склад</div><div class="cell" style="left:210px;top:842px;width:98px;height:28px;text-align:right;padding-right:5px;color:#ff8e80;font-size:18px">П</div><div class="cell n" style="left:308px;top:842px;width:188px;height:28px;padding-left:4px;color:#000">302</div><div class="cell n" style="left:496px;top:842px;width:148px;height:28px;padding-left:4px;color:#000">257</div><div class="cell " style="left:644px;top:842px;width:226px;height:28px;padding-left:4px;color:#000;letter-spacing:0.4px">В подготовке</div><div class="cell d" style="left:870px;top:842px;width:135px;height:28px;padding-left:5px;color:#000">07.12.2023</div><div class="cell d" style="left:1005px;top:842px;width:149px;height:28px;padding-left:4px;color:#000">07.12.2023</div><div class="cell d" style="left:1154px;top:842px;width:132px;height:28px;padding-left:4px;color:#000">07.12.2023</div><div class="cell " style="left:1286px;top:842px;width:778px;height:28px;padding-left:4px;color:#000;letter-spacing:-0.12px">Апт №003 пгт.Барышевка, ул.Киевский шлях,126а</div><div class="cell " style="left:2064px;top:842px;width:70px;height:28px;padding-left:4px;color:#000;letter-spacing:-0.12px">Апт №003 пгт.Барышевка, ул.Киевский шлях,126а</div><div class="cell n" style="left:17px;top:870px;width:76px;height:29px;text-align:right;padding-right:2px;color:#000">64305</div><div class="cell " style="left:93px;top:870px;width:117px;height:29px;text-align:right;padding-right:3px;color:#000;letter-spacing:0.25px">Склад</div><div class="cell" style="left:210px;top:870px;width:98px;height:29px;text-align:right;padding-right:5px;color:#ff8e80;font-size:18px">П</div><div class="cell n" style="left:308px;top:870px;width:188px;height:29px;padding-left:4px;color:#000">304</div><div class="cell n" style="left:496px;top:870px;width:148px;height:29px;padding-left:4px;color:#000">259</div><div class="cell " style="left:644px;top:870px;width:226px;height:29px;padding-left:4px;color:#000;letter-spacing:0.4px">В подготовке</div><div class="cell d" style="left:870px;top:870px;width:135px;height:29px;padding-left:5px;color:#000">11.12.2023</div><div class="cell d" style="left:1005px;top:870px;width:149px;height:29px;padding-left:4px;color:#000">11.12.2023</div><div class="cell d" style="left:1154px;top:870px;width:132px;height:29px;padding-left:4px;color:#000">11.12.2023</div><div class="cell " style="left:1286px;top:870px;width:778px;height:29px;padding-left:4px;color:#000;letter-spacing:-0.12px">Апт №003 пгт.Барышевка, ул.Киевский шлях,126а</div><div class="cell " style="left:2064px;top:870px;width:70px;height:29px;padding-left:4px;color:#000;letter-spacing:-0.12px">Апт №003 пгт.Барышевка, ул.Киевский шлях,126а</div><div class="cell n" style="left:17px;top:899px;width:76px;height:28px;text-align:right;padding-right:2px;color:#000">64304</div><div class="cell " style="left:93px;top:899px;width:117px;height:28px;text-align:right;padding-right:3px;color:#000;letter-spacing:0.25px">Склад</div><div class="cell" style="left:210px;top:899px;width:98px;height:28px;text-align:right;padding-right:5px;color:#ff8e80;font-size:18px">П</div><div class="cell n" style="left:308px;top:899px;width:188px;height:28px;padding-left:4px;color:#000">303</div><div class="cell n" style="left:496px;top:899px;width:148px;height:28px;padding-left:4px;color:#000">258</div><div class="cell " style="left:644px;top:899px;width:226px;height:28px;padding-left:4px;color:#000;letter-spacing:0.4px">В подготовке</div><div class="cell d" style="left:870px;top:899px;width:135px;height:28px;padding-left:5px;color:#000">11.12.2023</div><div class="cell d" style="left:1005px;top:899px;width:149px;height:28px;padding-left:4px;color:#000">11.12.2023</div><div class="cell d" style="left:1154px;top:899px;width:132px;height:28px;padding-left:4px;color:#000">11.12.2023</div><div class="cell " style="left:1286px;top:899px;width:778px;height:28px;padding-left:4px;color:#000;letter-spacing:-0.12px">Апт №003 пгт.Барышевка, ул.Киевский шлях,126а</div><div class="cell " style="left:2064px;top:899px;width:70px;height:28px;padding-left:4px;color:#000;letter-spacing:-0.12px">Апт №003 пгт.Барышевка, ул.Киевский шлях,126а</div><div class="cell n" style="left:17px;top:927px;width:76px;height:29px;text-align:right;padding-right:2px;color:#000">64373</div><div class="cell " style="left:93px;top:927px;width:117px;height:29px;text-align:right;padding-right:3px;color:#000;letter-spacing:0.25px">Склад</div><div class="cell" style="left:210px;top:927px;width:98px;height:29px;text-align:right;padding-right:5px;color:#ff8e80;font-size:18px">П</div><div class="cell n" style="left:308px;top:927px;width:188px;height:29px;padding-left:4px;color:#000">305</div><div class="cell n" style="left:496px;top:927px;width:148px;height:29px;padding-left:4px;color:#000">260</div><div class="cell " style="left:644px;top:927px;width:226px;height:29px;padding-left:4px;color:#000;letter-spacing:0.4px">В подготовке</div><div class="cell d" style="left:870px;top:927px;width:135px;height:29px;padding-left:5px;color:#000">01.02.2024</div><div class="cell d" style="left:1005px;top:927px;width:149px;height:29px;padding-left:4px;color:#000">01.02.2024</div><div class="cell d" style="left:1154px;top:927px;width:132px;height:29px;padding-left:4px;color:#000">01.02.2024</div><div class="cell " style="left:1286px;top:927px;width:778px;height:29px;padding-left:4px;color:#000;letter-spacing:-0.12px">Апт №003 пгт.Барышевка, ул.Киевский шлях,126а</div><div class="cell " style="left:2064px;top:927px;width:70px;height:29px;padding-left:4px;color:#000;letter-spacing:-0.12px">Апт №003 пгт.Барышевка, ул.Киевский шлях,126а</div><div class="cell n" style="left:17px;top:956px;width:76px;height:28px;text-align:right;padding-right:2px;color:#000">64550</div><div class="cell " style="left:93px;top:956px;width:117px;height:28px;text-align:right;padding-right:3px;color:#000;letter-spacing:0.25px">Склад</div><div class="cell" style="left:210px;top:956px;width:98px;height:28px;text-align:right;padding-right:5px;color:#ff8e80;font-size:18px">П</div><div class="cell n" style="left:308px;top:956px;width:188px;height:28px;padding-left:4px;color:#000">311</div><div class="cell n" style="left:496px;top:956px;width:148px;height:28px;padding-left:4px;color:#000">262</div><div class="cell " style="left:644px;top:956px;width:226px;height:28px;padding-left:4px;color:#000;letter-spacing:0.4px">В подготовке</div><div class="cell d" style="left:870px;top:956px;width:135px;height:28px;padding-left:5px;color:#000">02.07.2024</div><div class="cell d" style="left:1005px;top:956px;width:149px;height:28px;padding-left:4px;color:#000">02.07.2024</div><div class="cell d" style="left:1154px;top:956px;width:132px;height:28px;padding-left:4px;color:#000">02.07.2024</div><div class="cell " style="left:1286px;top:956px;width:778px;height:28px;padding-left:4px;color:#000;letter-spacing:-0.48px">Аква Фудз ООО</div><div class="cell " style="left:2064px;top:956px;width:70px;height:28px;padding-left:4px;color:#000;letter-spacing:-0.12px">Апт №003 пгт.Барышевка, ул.Киевский шлях,126а</div><div class="cell n" style="left:17px;top:984px;width:76px;height:29px;text-align:right;padding-right:2px;color:#000">64573</div><div class="cell " style="left:93px;top:984px;width:117px;height:29px;text-align:right;padding-right:3px;color:#000;letter-spacing:0.25px">Склад</div><div class="cell" style="left:210px;top:984px;width:98px;height:29px;text-align:right;padding-right:5px;color:#ff8e80;font-size:18px">П</div><div class="cell n" style="left:308px;top:984px;width:188px;height:29px;padding-left:4px;color:#000">315</div><div class="cell n" style="left:496px;top:984px;width:148px;height:29px;padding-left:4px;color:#000">265</div><div class="cell " style="left:644px;top:984px;width:226px;height:29px;padding-left:4px;color:#000;letter-spacing:0.4px">В подготовке</div><div class="cell d" style="left:870px;top:984px;width:135px;height:29px;padding-left:5px;color:#000">11.07.2024</div><div class="cell d" style="left:1005px;top:984px;width:149px;height:29px;padding-left:4px;color:#000">11.07.2024</div><div class="cell d" style="left:1154px;top:984px;width:132px;height:29px;padding-left:4px;color:#000">11.07.2024</div><div class="cell " style="left:1286px;top:984px;width:778px;height:29px;padding-left:4px;color:#000;letter-spacing:-0.33px">Офісменеджер ТОВ</div><div class="cell " style="left:2064px;top:984px;width:70px;height:29px;padding-left:4px;color:#000;letter-spacing:-0.12px">Апт №003 пгт.Барышевка, ул.Киевский шлях,126а</div><div class="cell n" style="left:17px;top:1013px;width:76px;height:28px;text-align:right;padding-right:2px;color:#000">64574</div><div class="cell " style="left:93px;top:1013px;width:117px;height:28px;text-align:right;padding-right:3px;color:#000;letter-spacing:0.25px">Склад</div><div class="cell" style="left:210px;top:1013px;width:98px;height:28px;text-align:right;padding-right:5px;color:#ff8e80;font-size:18px">П</div><div class="cell n" style="left:308px;top:1013px;width:188px;height:28px;padding-left:4px;color:#000">316</div><div class="cell n" style="left:496px;top:1013px;width:148px;height:28px;padding-left:4px;color:#000">266</div><div class="cell " style="left:644px;top:1013px;width:226px;height:28px;padding-left:4px;color:#000;letter-spacing:0.4px">В подготовке</div><div class="cell d" style="left:870px;top:1013px;width:135px;height:28px;padding-left:5px;color:#000">11.07.2024</div><div class="cell d" style="left:1005px;top:1013px;width:149px;height:28px;padding-left:4px;color:#000">11.07.2024</div><div class="cell d" style="left:1154px;top:1013px;width:132px;height:28px;padding-left:4px;color:#000">11.07.2024</div><div class="cell " style="left:1286px;top:1013px;width:778px;height:28px;padding-left:4px;color:#000;letter-spacing:-0.31px">Благодійний фонд соціального розвитку Баришівського району Надія</div><div class="cell " style="left:2064px;top:1013px;width:70px;height:28px;padding-left:4px;color:#000;letter-spacing:-0.12px">Апт №003 пгт.Барышевка, ул.Киевский шлях,126а</div><div class="cell n" style="left:17px;top:1041px;width:76px;height:29px;text-align:right;padding-right:2px;color:#000">64575</div><div class="cell " style="left:93px;top:1041px;width:117px;height:29px;text-align:right;padding-right:3px;color:#000;letter-spacing:0.25px">Склад</div><div class="cell" style="left:210px;top:1041px;width:98px;height:29px;text-align:right;padding-right:5px;color:#ff8e80;font-size:18px">П</div><div class="cell n" style="left:308px;top:1041px;width:188px;height:29px;padding-left:4px;color:#000">317</div><div class="cell n" style="left:496px;top:1041px;width:148px;height:29px;padding-left:4px;color:#000">267</div><div class="cell " style="left:644px;top:1041px;width:226px;height:29px;padding-left:4px;color:#000;letter-spacing:0.4px">В подготовке</div><div class="cell d" style="left:870px;top:1041px;width:135px;height:29px;padding-left:5px;color:#000">11.07.2024</div><div class="cell d" style="left:1005px;top:1041px;width:149px;height:29px;padding-left:4px;color:#000">11.07.2024</div><div class="cell d" style="left:1154px;top:1041px;width:132px;height:29px;padding-left:4px;color:#000">11.07.2024</div><div class="cell " style="left:1286px;top:1041px;width:778px;height:29px;padding-left:4px;color:#000;letter-spacing:-0.31px">Благодійний фонд соціального розвитку Баришівського району Надія</div><div class="cell " style="left:2064px;top:1041px;width:70px;height:29px;padding-left:4px;color:#000;letter-spacing:-0.12px">Апт №003 пгт.Барышевка, ул.Киевский шлях,126а</div><div class="cell n" style="left:17px;top:1070px;width:76px;height:28px;text-align:right;padding-right:2px;color:#000">64571</div><div class="cell " style="left:93px;top:1070px;width:117px;height:28px;text-align:right;padding-right:3px;color:#000;letter-spacing:0.25px">Склад</div><div class="cell" style="left:210px;top:1070px;width:98px;height:28px;text-align:right;padding-right:5px;color:#ff8e80;font-size:18px">П</div><div class="cell n" style="left:308px;top:1070px;width:188px;height:28px;padding-left:4px;color:#000">312</div><div class="cell n" style="left:496px;top:1070px;width:148px;height:28px;padding-left:4px;color:#000">263</div><div class="cell " style="left:644px;top:1070px;width:226px;height:28px;padding-left:4px;color:#000;letter-spacing:0.4px">В подготовке</div><div class="cell d" style="left:870px;top:1070px;width:135px;height:28px;padding-left:5px;color:#000">11.07.2024</div><div class="cell d" style="left:1005px;top:1070px;width:149px;height:28px;padding-left:4px;color:#000">11.07.2024</div><div class="cell d" style="left:1154px;top:1070px;width:132px;height:28px;padding-left:4px;color:#000">11.07.2024</div><div class="cell " style="left:1286px;top:1070px;width:778px;height:28px;padding-left:4px;color:#000;letter-spacing:-0.12px">Апт №003 пгт.Барышевка, ул.Киевский шлях,126а</div><div class="cell " style="left:2064px;top:1070px;width:70px;height:28px;padding-left:4px;color:#000;letter-spacing:-0.12px">Апт №003 пгт.Барышевка, ул.Киевский шлях,126а</div><div class="cell n" style="left:17px;top:1098px;width:76px;height:29px;text-align:right;padding-right:2px;color:#000">64572</div><div class="cell " style="left:93px;top:1098px;width:117px;height:29px;text-align:right;padding-right:3px;color:#000;letter-spacing:0.25px">Склад</div><div class="cell" style="left:210px;top:1098px;width:98px;height:29px;text-align:right;padding-right:5px;color:#ff8e80;font-size:18px">П</div><div class="cell n" style="left:308px;top:1098px;width:188px;height:29px;padding-left:4px;color:#000">314</div><div class="cell n" style="left:496px;top:1098px;width:148px;height:29px;padding-left:4px;color:#000">264</div><div class="cell " style="left:644px;top:1098px;width:226px;height:29px;padding-left:4px;color:#000;letter-spacing:0.4px">В подготовке</div><div class="cell d" style="left:870px;top:1098px;width:135px;height:29px;padding-left:5px;color:#000">11.07.2024</div><div class="cell d" style="left:1005px;top:1098px;width:149px;height:29px;padding-left:4px;color:#000">11.07.2024</div><div class="cell d" style="left:1154px;top:1098px;width:132px;height:29px;padding-left:4px;color:#000">11.07.2024</div><div class="cell " style="left:1286px;top:1098px;width:778px;height:29px;padding-left:4px;color:#000;letter-spacing:-0.1px">(офіс)</div><div class="cell " style="left:2064px;top:1098px;width:70px;height:29px;padding-left:4px;color:#000;letter-spacing:-0.12px">Апт №003 пгт.Барышевка, ул.Киевский шлях,126а</div><div class="cell n" style="left:17px;top:1127px;width:76px;height:28px;text-align:right;padding-right:2px;color:#000">64576</div><div class="cell " style="left:93px;top:1127px;width:117px;height:28px;text-align:right;padding-right:3px;color:#000;letter-spacing:0.25px">Склад</div><div class="cell" style="left:210px;top:1127px;width:98px;height:28px;text-align:right;padding-right:5px;color:#ff8e80;font-size:18px">П</div><div class="cell n" style="left:308px;top:1127px;width:188px;height:28px;padding-left:4px;color:#000">318</div><div class="cell n" style="left:496px;top:1127px;width:148px;height:28px;padding-left:4px;color:#000">268</div><div class="cell " style="left:644px;top:1127px;width:226px;height:28px;padding-left:4px;color:#000;letter-spacing:0.4px">В подготовке</div><div class="cell d" style="left:870px;top:1127px;width:135px;height:28px;padding-left:5px;color:#000">11.07.2024</div><div class="cell d" style="left:1005px;top:1127px;width:149px;height:28px;padding-left:4px;color:#000">11.07.2024</div><div class="cell d" style="left:1154px;top:1127px;width:132px;height:28px;padding-left:4px;color:#000">11.07.2024</div><div class="cell " style="left:1286px;top:1127px;width:778px;height:28px;padding-left:4px;color:#000;letter-spacing:-0.1px">(офіс)</div><div class="cell " style="left:2064px;top:1127px;width:70px;height:28px;padding-left:4px;color:#000;letter-spacing:-0.12px">Апт №003 пгт.Барышевка, ул.Киевский шлях,126а</div><div class="cell n" style="left:17px;top:1155px;width:76px;height:29px;text-align:right;padding-right:2px;color:#000">64582</div><div class="cell " style="left:93px;top:1155px;width:117px;height:29px;text-align:right;padding-right:3px;color:#000;letter-spacing:0.25px">Склад</div><div class="cell" style="left:210px;top:1155px;width:98px;height:29px;text-align:right;padding-right:5px;color:#ff8e80;font-size:18px">П</div><div class="cell n" style="left:308px;top:1155px;width:188px;height:29px;padding-left:4px;color:#000">57632</div><div class="cell n" style="left:496px;top:1155px;width:148px;height:29px;padding-left:4px;color:#000"></div><div class="cell " style="left:644px;top:1155px;width:226px;height:29px;padding-left:4px;color:#000;letter-spacing:0.4px">В подготовке</div><div class="cell d" style="left:870px;top:1155px;width:135px;height:29px;padding-left:5px;color:#000">12.07.2024</div><div class="cell d" style="left:1005px;top:1155px;width:149px;height:29px;padding-left:4px;color:#000;letter-spacing:0.1px">12.07.2024 13:...</div><div class="cell d" style="left:1154px;top:1155px;width:132px;height:29px;padding-left:4px;color:#000;letter-spacing:0.1px">12.07.2024 1...</div><div class="cell " style="left:1286px;top:1155px;width:778px;height:29px;padding-left:4px;color:#000;letter-spacing:-0.12px">Апт №003 пгт.Барышевка, ул.Киевский шлях,126а</div><div class="cell " style="left:2064px;top:1155px;width:70px;height:29px;padding-left:4px;color:#000;letter-spacing:-0.12px">Апт №003 пгт.Барышевка, ул.Киевский шлях,126а</div><div class="cell n" style="left:17px;top:1184px;width:76px;height:28px;text-align:right;padding-right:2px;color:#000">64583</div><div class="cell " style="left:93px;top:1184px;width:117px;height:28px;text-align:right;padding-right:3px;color:#000;letter-spacing:0.25px">Склад</div><div class="cell" style="left:210px;top:1184px;width:98px;height:28px;text-align:right;padding-right:5px;color:#ff8e80;font-size:18px">П</div><div class="cell n" style="left:308px;top:1184px;width:188px;height:28px;padding-left:4px;color:#000">57633</div><div class="cell n" style="left:496px;top:1184px;width:148px;height:28px;padding-left:4px;color:#000"></div><div class="cell " style="left:644px;top:1184px;width:226px;height:28px;padding-left:4px;color:#000;letter-spacing:0.4px">В подготовке</div><div class="cell d" style="left:870px;top:1184px;width:135px;height:28px;padding-left:5px;color:#000">12.07.2024</div><div class="cell d" style="left:1005px;top:1184px;width:149px;height:28px;padding-left:4px;color:#000;letter-spacing:0.1px">12.07.2024 13:...</div><div class="cell d" style="left:1154px;top:1184px;width:132px;height:28px;padding-left:4px;color:#000;letter-spacing:0.1px">12.07.2024 1...</div><div class="cell " style="left:1286px;top:1184px;width:778px;height:28px;padding-left:4px;color:#000;letter-spacing:-0.12px">Апт №003 пгт.Барышевка, ул.Киевский шлях,126а</div><div class="cell " style="left:2064px;top:1184px;width:70px;height:28px;padding-left:4px;color:#000;letter-spacing:-0.12px">Апт №003 пгт.Барышевка, ул.Киевский шлях,126а</div><div class="cell n" style="left:17px;top:1213px;width:76px;height:9px;text-align:right;padding-right:2px;color:#000">64584</div><div class="cell " style="left:93px;top:1213px;width:117px;height:9px;text-align:right;padding-right:3px;color:#000;letter-spacing:0.25px">Склад</div><div class="cell" style="left:210px;top:1213px;width:98px;height:9px;text-align:right;padding-right:5px;color:#ff8e80;font-size:18px">П</div><div class="cell n" style="left:308px;top:1213px;width:188px;height:9px;padding-left:4px;color:#000">321</div><div class="cell n" style="left:496px;top:1213px;width:148px;height:9px;padding-left:4px;color:#000">269</div><div class="cell " style="left:644px;top:1213px;width:226px;height:9px;padding-left:4px;color:#000;letter-spacing:0.4px">В подготовке</div><div class="cell d" style="left:870px;top:1213px;width:135px;height:9px;padding-left:5px;color:#000">15.07.2024</div><div class="cell d" style="left:1005px;top:1213px;width:149px;height:9px;padding-left:4px;color:#000">15.07.2024</div><div class="cell d" style="left:1154px;top:1213px;width:132px;height:9px;padding-left:4px;color:#000">15.07.2024</div><div class="cell " style="left:1286px;top:1213px;width:778px;height:9px;padding-left:4px;color:#000;letter-spacing:-0.12px">Апт №003 пгт.Барышевка, ул.Киевский шлях,126а</div><div class="cell " style="left:2064px;top:1213px;width:70px;height:9px;padding-left:4px;color:#000;letter-spacing:-0.12px">Апт №003 пгт.Барышевка, ул.Киевский шлях,126а</div><div class="a" style="left:0;top:1222px;width:2134px;height:2px;background:#a0a0a0"></div><div class="a" style="left:17px;top:1224px;width:1px;height:52px;background:#a9a9a9"></div><div class="a" style="left:311px;top:1226px;width:183px;height:47px;background:#e3e6e7;border:1px solid #dcdfe0"></div><div class="t" style="left:315px;top:1240px;font-size:18px;font-weight:bold;line-height:20px;color:#111;letter-spacing:-0.2px">Запис 196 із 241</div><div class="a" style="left:0;top:1276px;width:2134px;height:1px;background:#c6c6c6"></div><div class="a" style="left:2134px;top:189px;width:2px;height:1087px;background:#fafafa"></div><div class="a" style="left:2137px;top:1044px;width:22px;height:142px;background:#cdcdcd"></div><svg class="a" style="left:2141px;top:196px" width="12" height="12" viewBox="0 0 12 12"><path d="M1.5 8.5 L6 3.5 L10.5 8.5" fill="none" stroke="#606060" stroke-width="2.6"/></svg><svg class="a" style="left:2141px;top:1258px" width="12" height="12" viewBox="0 0 12 12"><path d="M1.5 2.5 L6 7.5 L10.5 2.5" fill="none" stroke="#606060" stroke-width="2.6"/></svg><div class="a" style="left:26px;top:1279px;width:481px;height:21px;background:#cdcdcd"></div><svg class="a" style="left:6px;top:1284px" width="12" height="12" viewBox="0 0 12 12"><path d="M8.5 1.5 L3.5 6 L8.5 10.5" fill="none" stroke="#606060" stroke-width="2.6"/></svg><svg class="a" style="left:2116px;top:1284px" width="12" height="12" viewBox="0 0 12 12"><path d="M3.5 1.5 L8.5 6 L3.5 10.5" fill="none" stroke="#606060" stroke-width="2.6"/></svg><div class="a" style="left:5px;top:1305px;width:187px;height:35px;background:#f0f0f0;border:2px solid #1a1a1a"></div><div class="t" style="left:9px;top:1313px;font-size:17px;line-height:20px;color:#1b1b2e">Головна</div><div class="a" style="left:195px;top:1305px;width:188px;height:35px;background:#ffcfa0;border:1.5px solid #2b8ad8"></div><div class="t" style="left:199px;top:1313px;font-size:17px;line-height:20px;color:#1b1b2e">Список: Видаткові д ...</div><div class="a" style="left:0;top:1343px;width:2159px;height:1px;background:#d6d6d6"></div><div class="a" style="left:297px;top:1346px;width:1px;height:25px;background:#d8d8d8"></div><div class="a" style="left:603px;top:1346px;width:1px;height:25px;background:#d8d8d8"></div><div class="a" style="left:661px;top:1346px;width:1px;height:25px;background:#d8d8d8"></div><div class="a" style="left:1118px;top:1346px;width:1px;height:25px;background:#d8d8d8"></div><svg class="a" style="left:4px;top:1348px" width="20" height="23" viewBox="0 0 20 23">
<path d="M1 3 Q1 1 9.5 1 Q18 1 18 3 V19 Q18 21.5 9.5 21.5 Q1 21.5 1 19 Z" fill="#9a9ad0" stroke="#7a7ab8" stroke-width="0.8"/>
<path d="M1 3 Q1 1 9.5 1 Q18 1 18 3 V6 Q9.5 7 1 6 Z" fill="#d8d8f2"/>
<rect x="1.5" y="6.5" width="16" height="2.2" fill="#2e7fd6"/>
<rect x="1.5" y="9.6" width="16" height="2.2" fill="#2e7fd6"/>
<rect x="1.5" y="12.7" width="16" height="2.2" fill="#2e7fd6"/>
<rect x="1.5" y="15.8" width="16" height="2" fill="#5d8fd8"/>
</svg><svg class="a" style="left:303px;top:1348px" width="18" height="23" viewBox="0 0 18 23">
<circle cx="7" cy="6.5" r="5.5" fill="#e8321a"/>
<path d="M1.5 21 Q1 15 5 13.5 H13 Q17 15 16.5 21 Q9 23 1.5 21 Z" fill="#8f8fd6"/>
<path d="M6.5 13.5 L9 16 L11.5 13.5 Z" fill="#e9a050"/>
<circle cx="9.5" cy="8" r="4.8" fill="#8c8fd8"/>
<rect x="6" y="6" width="6" height="2.5" fill="#b8bbee"/>
</svg><svg class="a" style="left:606px;top:1347px" width="22" height="24" viewBox="0 0 22 24">
<path d="M1 9 Q2 4 9 3.5 Q15 3 19.5 9 V19 H15 L11 15 L6 20 H1 Z" fill="#8484cc" stroke="#7070b8" stroke-width="0.6"/>
<path d="M3 7 Q8 4 15 5" stroke="#c2c2ea" stroke-width="2" fill="none"/>
<path d="M13 1 L20 9" stroke="#333" stroke-width="1"/>
<path d="M4.5 12 L6.5 12.5 L3.5 22 L1.5 21.5 Z" fill="#f2d23a" stroke="#222" stroke-width="0.6"/>
<path d="M12.5 15.5 L14.5 16 L12 23.5 L10 23 Z" fill="#f2d23a" stroke="#222" stroke-width="0.6"/>
</svg><div class="sb" style="left:30px">База даних: TASA3@TITAN</div><div class="sb" style="left:329px">Користувач: GIFT</div><div class="sb" style="left:635px">5</div><div class="sb" style="left:666px">Кассовый аппарат не подключен</div><div class="sb" style="left:1122px">Зона: Склад [1]</div><svg class="a" style="left:0;top:0" width="2159" height="1371" viewBox="0 0 2159 1371">
<polygon fill="#f00" points="193.4,181.8 462.2,653.6 460.8,654.4 188.8,184.5"/>
<polyline fill="none" stroke="#f00" stroke-width="4.4" stroke-linecap="round" stroke-linejoin="miter" points="191,197 190.2,183.2 203.5,190"/>
<polygon fill="#f00" points="189.5,180.5 192.5,187 187.5,188"/><polygon fill="#f00" points="190.5,184 191.5,194 200,189"/>
</svg>
</body></html>
